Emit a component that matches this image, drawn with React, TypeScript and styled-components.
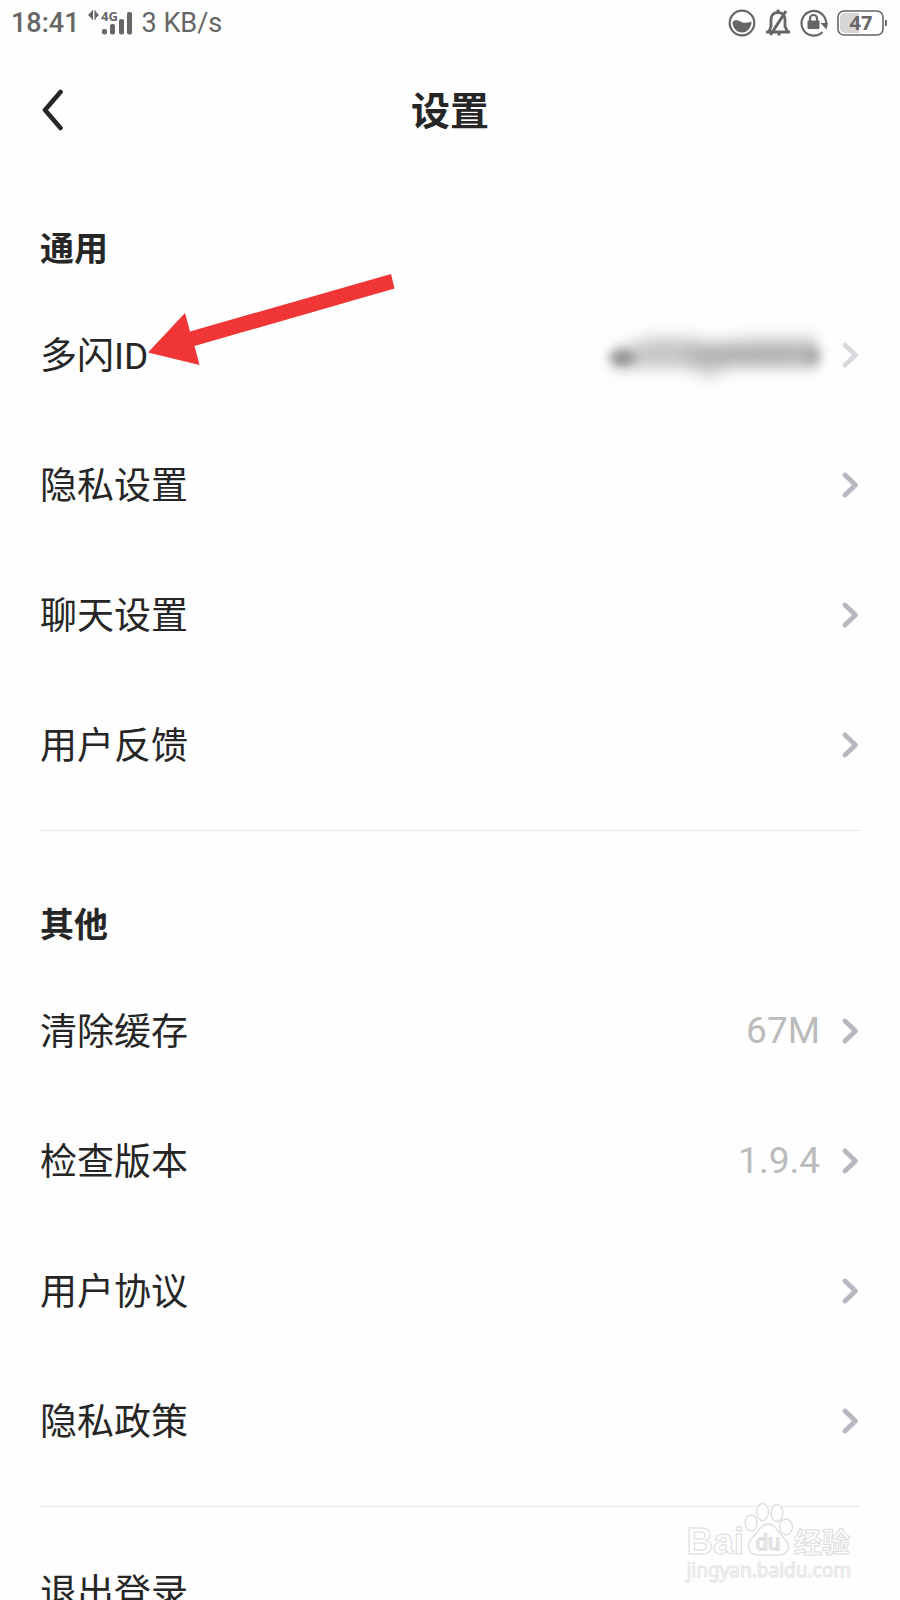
import React from "react";
import styled, { createGlobalStyle } from "styled-components";

const GlobalStyle = createGlobalStyle`
  * { box-sizing: border-box; }
  body {
    margin: 0;
    background: #fefefe;
    color: #262626;
    font-family: Roboto, "Noto Sans CJK SC", sans-serif;
  }
`;

const Screen = styled.div`
  position: relative;
  display: flex;
  flex-direction: column;
  height: 100vh;
  overflow: hidden;
`;

const StatusBar = styled.div`
  display: flex;
  align-items: center;
  justify-content: space-between;
  height: 46px;
  padding: 0 12px 0 11px;
  color: #666;
  font-size: 27px;
  line-height: 32px;
`;

const StatusGroup = styled.div<{ $gap: number }>`
  display: flex;
  align-items: center;
  gap: ${(p) => p.$gap}px;
`;

const Clock = styled.time`
  font-weight: 500;
`;

const StatusIcon = styled.svg`
  display: block;
  flex: none;
`;

const Header = styled.header`
  display: grid;
  grid-template-columns: 1fr auto 1fr;
  align-items: center;
  height: 128px;
  padding: 0 40px;
`;

const BackButton = styled.button`
  display: flex;
  align-items: center;
  justify-self: start;
  padding: 0;
  border: 0;
  background: none;
  cursor: pointer;
`;

const Title = styled.h1`
  margin: 0;
  padding-top: 4px;
  font-size: 39px;
  line-height: 56px;
  font-weight: 700;
`;

const Content = styled.main`
  flex: 1;
  min-height: 0;
  padding: 0 40px;
  overflow-y: auto;
  scrollbar-width: none;
`;

const Section = styled.section<{ $first?: boolean }>`
  padding: ${(p) => (p.$first ? "48px" : "67px")} 0 20px;
  border-bottom: 1px solid #e8e8e8;
`;

const SectionTitle = styled.h2`
  margin: 0 0 14px;
  font-size: 34px;
  line-height: 54px;
  font-weight: 700;
`;

const List = styled.ul`
  margin: 0;
  padding: 0;
  list-style: none;
`;

const Row = styled.button`
  display: flex;
  align-items: center;
  width: 100%;
  height: 130px;
  padding: 0;
  border: 0;
  background: none;
  color: inherit;
  font: inherit;
  font-size: 37px;
  line-height: 52px;
  text-align: left;
  cursor: pointer;
`;

const RowLabel = styled.span`
  flex: 1;
  padding-top: 4px;
`;

const RowValue = styled.span`
  margin-right: 21px;
  color: #bbb;
`;

const Footer = styled.div`
  padding-top: 20px;
`;

const Chevron = styled.svg<{ $faded?: boolean }>`
  flex: none;
  margin-right: 1px;
  stroke: ${(p) => (p.$faded ? "#d9d8de" : "#b7b6c1")};
`;

const HiddenId = styled.svg`
  flex: none;
  margin-right: 2px;
`;

const Pointer = styled.svg`
  position: absolute;
  left: 148px;
  top: 274px;
  pointer-events: none;
`;

const Watermark = styled.div`
  position: absolute;
  right: 48px;
  bottom: 18px;
  pointer-events: none;
`;

const WatermarkBrand = styled.div`
  display: flex;
  align-items: flex-end;
  justify-content: flex-end;
  height: 56px;
  padding-right: 2px;
  color: #fefefe;
  -webkit-text-stroke: 1px #dcdcdc;
  font-weight: 700;
`;

const BrandLatin = styled.span`
  font-family: "Liberation Sans", sans-serif;
  font-size: 37px;
  line-height: 32px;
`;

const BrandHan = styled.span`
  font-family: "Noto Sans CJK SC", sans-serif;
  font-size: 28px;
  line-height: 34px;
`;

const WatermarkUrl = styled.div`
  color: #fefefe;
  -webkit-text-stroke: 1px #e4e4e4;
  font-family: "Noto Sans", sans-serif;
  font-size: 19px;
  line-height: 24px;
`;

function SignalIcon() {
  return (
    <StatusIcon width="46" height="34" viewBox="0 -3 46 34" fill="#666" aria-label="4G">
      <path d="M0 6 4 2v8zM11 6 7 2v8z" />
      <path d="M4.500 1v10M7 1v10" stroke="#666" strokeWidth="1" fill="none" />
      <text x="13" y="12" fontSize="13" fontWeight="700" fontFamily="Noto Sans, sans-serif">4G</text>
      <rect x="14" y="20" width="5" height="5.500" rx="2" />
      <rect x="22" y="15" width="5" height="10.500" rx="2" />
      <rect x="31" y="10" width="5" height="15.500" rx="2" />
      <rect x="39" y="3" width="5" height="22.500" rx="2" />
    </StatusIcon>
  );
}

function EyeCareIcon() {
  return (
    <StatusIcon width="28" height="28" viewBox="0 0 28 28" aria-hidden="true">
      <circle cx="14" cy="14" r="12.300" fill="none" stroke="#666" strokeWidth="2.200" />
      <path d="M4.500 13c1.500-2 5-2.500 8-.5 3 2 7 1.500 11 0 0 6-4 11-9.500 11s-9.500-5-9.500-10.500z" fill="#666" />
    </StatusIcon>
  );
}

function MuteIcon() {
  return (
    <StatusIcon width="26" height="30" viewBox="0 0 26 30" fill="none" stroke="#666" strokeWidth="2.800" aria-hidden="true">
      <path d="M1 24h24M4 23.500l2-5V11.500c0-4.500 3-7 7-7s7 2.500 7 7v7l2.500 5M13 4V1.500" />
      <path d="M21 3 5.500 27M14 25v2.500" strokeWidth="3" />
    </StatusIcon>
  );
}

function RotationLockIcon() {
  return (
    <StatusIcon width="28" height="28" viewBox="0 0 28 28" aria-hidden="true">
      <path d="M22.500 23A12.300 12.300 0 1 1 26 16" fill="none" stroke="#666" strokeWidth="2.200" />
      <path d="M20.500 14l7.500 0-1.500 6.500z" fill="#666" />
      <rect x="7.500" y="11.500" width="12" height="8.500" rx="1" fill="#666" />
      <path d="M10 12V9.500a3.500 3.500 0 0 1 7 0V12" fill="none" stroke="#666" strokeWidth="2.200" />
    </StatusIcon>
  );
}

function BatteryIcon() {
  return (
    <StatusIcon width="51" height="26" viewBox="0 0 51 26" aria-label="47%">
      <rect x="1" y="1" width="45" height="24" rx="6" fill="none" stroke="#666" strokeWidth="1.600" />
      <path d="M8 3h14v20H8a5 5 0 0 1-5-5V8a5 5 0 0 1 5-5z" fill="#d6d6d6" />
      <path d="M48 10h1a1 1 0 0 1 1 1v4a1 1 0 0 1-1 1h-1z" fill="#666" />
      <text x="24" y="20" textAnchor="middle" fontSize="20" fontWeight="700" fill="#666" fontFamily="Noto Sans, sans-serif">47</text>
    </StatusIcon>
  );
}

function BlurredId() {
  return (
    <HiddenId width="250" height="90" viewBox="0 0 250 90" role="img" aria-label="多闪ID">
      <defs>
        <filter id="soft" x="-20%" y="-80%" width="140%" height="260%">
          <feGaussianBlur stdDeviation="6 8" />
        </filter>
        <filter id="mid" x="-30%" y="-150%" width="160%" height="400%">
          <feGaussianBlur stdDeviation="10 6" />
        </filter>
        <filter id="tight" x="-80%" y="-80%" width="260%" height="260%">
          <feGaussianBlur stdDeviation="6 5" />
        </filter>
      </defs>
      <path d="M24 40 62 28h38l20 4 50-4h58v30h-84l-24 8-24-8H24z" fill="#b4b4b4" opacity=".75" filter="url(#soft)" />
      <path d="M100 37h122v16H100z" fill="#999" opacity=".4" filter="url(#mid)" />
      <ellipse cx="33" cy="48" rx="12" ry="8" fill="#777" opacity=".7" filter="url(#tight)" />
      <ellipse cx="224" cy="46" rx="6" ry="9" fill="#888" opacity=".6" filter="url(#tight)" />
    </HiddenId>
  );
}

interface Item {
  label: string;
  value?: string;
  masked?: boolean;
}

const general: Item[] = [
  { label: "多闪ID", masked: true },
  { label: "隐私设置" },
  { label: "聊天设置" },
  { label: "用户反馈" },
];

const others: Item[] = [
  { label: "清除缓存", value: "67M" },
  { label: "检查版本", value: "1.9.4" },
  { label: "用户协议" },
  { label: "隐私政策" },
];

function SettingRows({ items }: { items: Item[] }) {
  return (
    <List>
      {items.map((item) => (
        <li key={item.label}>
          <Row type="button">
            <RowLabel>{item.label}</RowLabel>
            {item.masked && <BlurredId />}
            {item.value && <RowValue>{item.value}</RowValue>}
            <Chevron $faded={item.masked} width="18" height="28" viewBox="0 0 18 28" fill="none" strokeWidth="4.800" strokeLinecap="round" strokeLinejoin="round" aria-hidden="true">
              <path d="M4 4 14.500 14 4 24" />
            </Chevron>
          </Row>
        </li>
      ))}
    </List>
  );
}

export default function App() {
  return (
    <>
      <GlobalStyle />
      <Screen>
        <StatusBar>
          <StatusGroup $gap={8}>
            <Clock>18:41</Clock>
            <SignalIcon />
            <span>3 KB/s</span>
          </StatusGroup>
          <StatusGroup $gap={9}>
            <EyeCareIcon />
            <MuteIcon />
            <RotationLockIcon />
            <BatteryIcon />
          </StatusGroup>
        </StatusBar>
        <Header>
          <BackButton type="button" aria-label="返回">
            <svg width="24" height="42" viewBox="0 0 24 42" fill="none" stroke="#262626" strokeWidth="4.600" strokeLinecap="round" strokeLinejoin="round">
              <path d="M20.500 3 5 21 20.500 39" />
            </svg>
          </BackButton>
          <Title>设置</Title>
        </Header>
        <Content>
          <Section $first>
            <SectionTitle>通用</SectionTitle>
            <SettingRows items={general} />
          </Section>
          <Section>
            <SectionTitle>其他</SectionTitle>
            <SettingRows items={others} />
          </Section>
          <Footer>
            <Row type="button">
              <RowLabel>退出登录</RowLabel>
            </Row>
          </Footer>
        </Content>
        <Pointer width="247" height="92" viewBox="0 0 247 92" aria-hidden="true">
          <path d="M0 78.500 37 39l5 18.500L243 0l3.500 14.500L46.500 72l5 19z" fill="#ef3535" />
        </Pointer>
        <Watermark>
          <WatermarkBrand>
            <BrandLatin>Bai</BrandLatin>
            <svg width="50" height="56" viewBox="0 0 50 56" fill="#fefefe" stroke="#dcdcdc" strokeWidth="1.300" aria-hidden="true">
              <ellipse cx="7" cy="21" rx="6" ry="8" />
              <ellipse cx="18.500" cy="10" rx="6" ry="8.500" />
              <ellipse cx="33" cy="11" rx="6" ry="8.500" />
              <ellipse cx="42" cy="25" rx="6.500" ry="8" />
              <path d="M24 22c7 0 9 7 14 12 4 4 8 8 6 13-3 8-12 6-20 6s-16 2-19-6c-2-5 1-9 5-13 5-5 7-12 14-12z" />
              <text x="24" y="48" textAnchor="middle" fontSize="22" fontWeight="400" fontFamily="Liberation Sans, sans-serif">du</text>
            </svg>
            <BrandHan>经验</BrandHan>
          </WatermarkBrand>
          <WatermarkUrl>jingyan.baidu.com</WatermarkUrl>
        </Watermark>
      </Screen>
    </>
  );
}
